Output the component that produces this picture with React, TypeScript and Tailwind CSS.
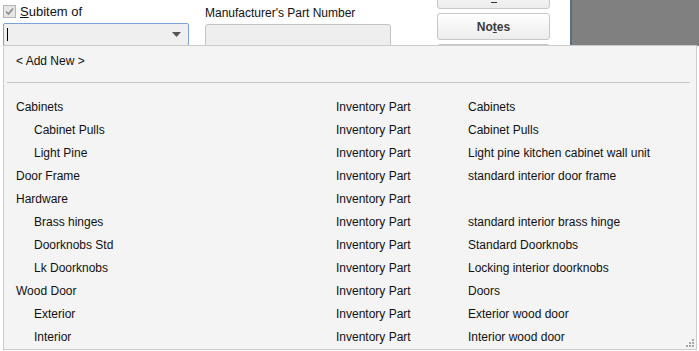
import React from 'react';

type Row = { name: string; indent?: boolean; type: string; desc: string };

const rows: Row[] = [
  { name: 'Cabinets', type: 'Inventory Part', desc: 'Cabinets' },
  { name: 'Cabinet Pulls', indent: true, type: 'Inventory Part', desc: 'Cabinet Pulls' },
  { name: 'Light Pine', indent: true, type: 'Inventory Part', desc: 'Light pine kitchen cabinet wall unit' },
  { name: 'Door Frame', type: 'Inventory Part', desc: 'standard interior door frame' },
  { name: 'Hardware', type: 'Inventory Part', desc: '' },
  { name: 'Brass hinges', indent: true, type: 'Inventory Part', desc: 'standard interior brass hinge' },
  { name: 'Doorknobs Std', indent: true, type: 'Inventory Part', desc: 'Standard Doorknobs' },
  { name: 'Lk Doorknobs', indent: true, type: 'Inventory Part', desc: 'Locking interior doorknobs' },
  { name: 'Wood Door', type: 'Inventory Part', desc: 'Doors' },
  { name: 'Exterior', indent: true, type: 'Inventory Part', desc: 'Exterior wood door' },
  { name: 'Interior', indent: true, type: 'Inventory Part', desc: 'Interior wood door' },
];

const btn =
  'shrink-0 h-[27px] rounded-[3px] border border-[#c7c7c7] bg-gradient-to-b from-white to-[#ececec] flex justify-center';

export default function App() {
  return (
    <div
      className="relative w-[699px] h-[351px] overflow-hidden bg-white text-[12px] text-[#111]"
      style={{ fontFamily: '"Liberation Sans", Arial, sans-serif' }}
    >
      {/* form strip behind the popup */}
      <div className="flex h-[60px]">
        {/* subitem of */}
        <div className="w-[205px] pl-[3px] pt-[5px] shrink-0">
          <div className="flex items-center h-[13px]">
            <span className="w-[13px] h-[13px] border border-[#b4b4b4] bg-[#e6e6e6] flex items-center justify-center">
              <svg width="9" height="9" viewBox="0 0 9 9">
                <path d="M1 4.5 L3.5 7 L8 1.5" fill="none" stroke="#8a8a8a" strokeWidth="1.6" />
              </svg>
            </span>
            <span className="ml-[4px] leading-[13px] text-[13px]">
              <span className="underline">S</span>ubitem of
            </span>
          </div>
          <div className="mt-[5px] w-[186px] h-[23px] rounded-[2px] border border-[#7ea3d8] bg-[#efefef] flex items-center justify-between pl-[3px] pr-[7px]">
            <span className="w-px h-[13px] bg-black" />
            <svg width="9" height="5" viewBox="0 0 9 5">
              <path d="M0 0 H9 L4.5 5 Z" fill="#555" />
            </svg>
          </div>
        </div>

        {/* manufacturer part number */}
        <div className="w-[232px] shrink-0 pt-[6px]">
          <div className="leading-[14px]">Manufacturer's Part Number</div>
          <div className="mt-[4px] w-[186px] h-[24px] rounded-[3px] border border-[#c4c4c4] bg-[#eeeeee]" />
        </div>

        {/* buttons */}
        <div className="w-[113px] shrink-0 -mt-[18px] flex flex-col gap-[4px]">
          <div className={`${btn} items-end`}>
            <span className="mb-[5px] w-[6px] h-px bg-[#333]" />
          </div>
          <div className={`${btn} items-center font-bold text-[#3a3a3a]`}>
            No<span className="underline">t</span>es
          </div>
          <div className={btn} />
        </div>

        {/* gray area */}
        <div className="ml-[20px] flex-1 h-[46px] bg-[#808080] border-l-2 border-[#5b6e80]" />
      </div>

      {/* dropdown list popup */}
      <div className="absolute left-[3px] top-[45px] w-[694px] h-[305px] bg-[#f4f4f4] border border-[#cbcbcb]">
        <div className="mt-[4px] h-[22px] pl-[12px] flex items-center">&lt; Add New &gt;</div>
        <div className="mt-[10px] ml-[3px] mr-[6px] h-px bg-[#c6c6c6]" />
        <div className="mt-[12px] pl-[12px]">
          {rows.map((r) => (
            <div key={r.name} className="grid grid-cols-[320px_132px_1fr] h-[23px] items-center">
              <span className={r.indent ? 'pl-[18px]' : ''}>{r.name}</span>
              <span>{r.type}</span>
              <span>{r.desc}</span>
            </div>
          ))}
        </div>

        {/* resize grip */}
        <svg className="absolute right-[2px] bottom-[2px]" width="9" height="9" viewBox="0 0 9 9">
          <rect x="7" y="1" width="2" height="2" fill="#a8a8a8" />
          <rect x="4" y="4" width="2" height="2" fill="#a8a8a8" />
          <rect x="7" y="4" width="2" height="2" fill="#a8a8a8" />
          <rect x="1" y="7" width="2" height="2" fill="#a8a8a8" />
          <rect x="4" y="7" width="2" height="2" fill="#a8a8a8" />
          <rect x="7" y="7" width="2" height="2" fill="#a8a8a8" />
        </svg>
      </div>
    </div>
  );
}
